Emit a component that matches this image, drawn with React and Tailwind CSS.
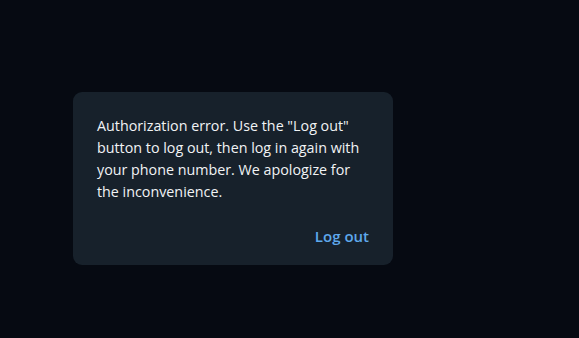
export default function App() {
  return (
    <div className="min-h-[338px] w-full bg-[#060a12] pl-[73px] pt-[92px]" style={{ fontFamily: '"Open Sans", sans-serif' }}>
      <div className="w-[320px] rounded-[9px] bg-[#17212b] px-6 pt-[23px] pb-[18px]">
        <p className="text-[14.3px] leading-[22px] text-[#f1f3f5]">
          Authorization error. Use the "Log out" button to log out, then log in again with your phone number. We apologize for the inconvenience.
        </p>
        <div className="mt-[22px] flex justify-end">
          <button className="text-[15px] leading-[22px] font-semibold text-[#5ea8ec]">Log out</button>
        </div>
      </div>
    </div>
  );
}
